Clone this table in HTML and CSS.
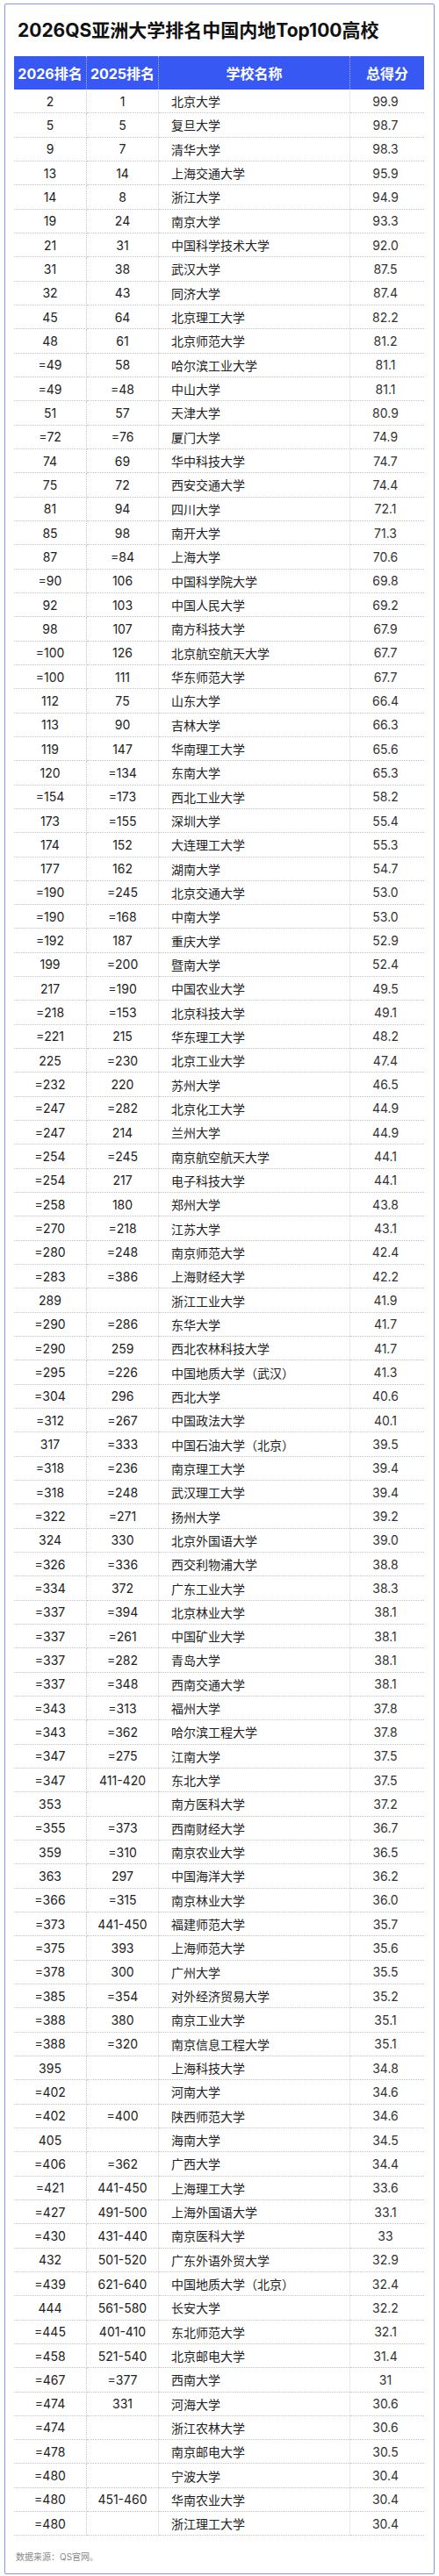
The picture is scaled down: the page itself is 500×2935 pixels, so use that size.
FILE: index.html
```html
<!DOCTYPE html>
<html lang="zh-CN">
<head>
<meta charset="utf-8">
<title>2026QS亚洲大学排名中国内地Top100高校</title>
<link rel="stylesheet" href="styles.css">
</head>
<body>
<div class="frame">
  <h1 class="title">2026QS亚洲大学排名中国内地Top100高校</h1>
  <table class="rank">
    <colgroup><col class="c1"><col class="c2"><col class="c3"><col class="c4"></colgroup>
    <thead>
      <tr><th>2026排名</th><th>2025排名</th><th>学校名称</th><th class="last">总得分</th></tr>
    </thead>
    <tbody>
      <tr><td>2</td><td>1</td><td class="name">北京大学</td><td class="score">99.9</td></tr>
      <tr><td>5</td><td>5</td><td class="name">复旦大学</td><td class="score">98.7</td></tr>
      <tr><td>9</td><td>7</td><td class="name">清华大学</td><td class="score">98.3</td></tr>
      <tr><td>13</td><td>14</td><td class="name">上海交通大学</td><td class="score">95.9</td></tr>
      <tr><td>14</td><td>8</td><td class="name">浙江大学</td><td class="score">94.9</td></tr>
      <tr><td>19</td><td>24</td><td class="name">南京大学</td><td class="score">93.3</td></tr>
      <tr><td>21</td><td>31</td><td class="name">中国科学技术大学</td><td class="score">92.0</td></tr>
      <tr><td>31</td><td>38</td><td class="name">武汉大学</td><td class="score">87.5</td></tr>
      <tr><td>32</td><td>43</td><td class="name">同济大学</td><td class="score">87.4</td></tr>
      <tr><td>45</td><td>64</td><td class="name">北京理工大学</td><td class="score">82.2</td></tr>
      <tr><td>48</td><td>61</td><td class="name">北京师范大学</td><td class="score">81.2</td></tr>
      <tr><td>=49</td><td>58</td><td class="name">哈尔滨工业大学</td><td class="score">81.1</td></tr>
      <tr><td>=49</td><td>=48</td><td class="name">中山大学</td><td class="score">81.1</td></tr>
      <tr><td>51</td><td>57</td><td class="name">天津大学</td><td class="score">80.9</td></tr>
      <tr><td>=72</td><td>=76</td><td class="name">厦门大学</td><td class="score">74.9</td></tr>
      <tr><td>74</td><td>69</td><td class="name">华中科技大学</td><td class="score">74.7</td></tr>
      <tr><td>75</td><td>72</td><td class="name">西安交通大学</td><td class="score">74.4</td></tr>
      <tr><td>81</td><td>94</td><td class="name">四川大学</td><td class="score">72.1</td></tr>
      <tr><td>85</td><td>98</td><td class="name">南开大学</td><td class="score">71.3</td></tr>
      <tr><td>87</td><td>=84</td><td class="name">上海大学</td><td class="score">70.6</td></tr>
      <tr><td>=90</td><td>106</td><td class="name">中国科学院大学</td><td class="score">69.8</td></tr>
      <tr><td>92</td><td>103</td><td class="name">中国人民大学</td><td class="score">69.2</td></tr>
      <tr><td>98</td><td>107</td><td class="name">南方科技大学</td><td class="score">67.9</td></tr>
      <tr><td>=100</td><td>126</td><td class="name">北京航空航天大学</td><td class="score">67.7</td></tr>
      <tr><td>=100</td><td>111</td><td class="name">华东师范大学</td><td class="score">67.7</td></tr>
      <tr><td>112</td><td>75</td><td class="name">山东大学</td><td class="score">66.4</td></tr>
      <tr><td>113</td><td>90</td><td class="name">吉林大学</td><td class="score">66.3</td></tr>
      <tr><td>119</td><td>147</td><td class="name">华南理工大学</td><td class="score">65.6</td></tr>
      <tr><td>120</td><td>=134</td><td class="name">东南大学</td><td class="score">65.3</td></tr>
      <tr><td>=154</td><td>=173</td><td class="name">西北工业大学</td><td class="score">58.2</td></tr>
      <tr><td>173</td><td>=155</td><td class="name">深圳大学</td><td class="score">55.4</td></tr>
      <tr><td>174</td><td>152</td><td class="name">大连理工大学</td><td class="score">55.3</td></tr>
      <tr><td>177</td><td>162</td><td class="name">湖南大学</td><td class="score">54.7</td></tr>
      <tr><td>=190</td><td>=245</td><td class="name">北京交通大学</td><td class="score">53.0</td></tr>
      <tr><td>=190</td><td>=168</td><td class="name">中南大学</td><td class="score">53.0</td></tr>
      <tr><td>=192</td><td>187</td><td class="name">重庆大学</td><td class="score">52.9</td></tr>
      <tr><td>199</td><td>=200</td><td class="name">暨南大学</td><td class="score">52.4</td></tr>
      <tr><td>217</td><td>=190</td><td class="name">中国农业大学</td><td class="score">49.5</td></tr>
      <tr><td>=218</td><td>=153</td><td class="name">北京科技大学</td><td class="score">49.1</td></tr>
      <tr><td>=221</td><td>215</td><td class="name">华东理工大学</td><td class="score">48.2</td></tr>
      <tr><td>225</td><td>=230</td><td class="name">北京工业大学</td><td class="score">47.4</td></tr>
      <tr><td>=232</td><td>220</td><td class="name">苏州大学</td><td class="score">46.5</td></tr>
      <tr><td>=247</td><td>=282</td><td class="name">北京化工大学</td><td class="score">44.9</td></tr>
      <tr><td>=247</td><td>214</td><td class="name">兰州大学</td><td class="score">44.9</td></tr>
      <tr><td>=254</td><td>=245</td><td class="name">南京航空航天大学</td><td class="score">44.1</td></tr>
      <tr><td>=254</td><td>217</td><td class="name">电子科技大学</td><td class="score">44.1</td></tr>
      <tr><td>=258</td><td>180</td><td class="name">郑州大学</td><td class="score">43.8</td></tr>
      <tr><td>=270</td><td>=218</td><td class="name">江苏大学</td><td class="score">43.1</td></tr>
      <tr><td>=280</td><td>=248</td><td class="name">南京师范大学</td><td class="score">42.4</td></tr>
      <tr><td>=283</td><td>=386</td><td class="name">上海财经大学</td><td class="score">42.2</td></tr>
      <tr><td>289</td><td></td><td class="name">浙江工业大学</td><td class="score">41.9</td></tr>
      <tr><td>=290</td><td>=286</td><td class="name">东华大学</td><td class="score">41.7</td></tr>
      <tr><td>=290</td><td>259</td><td class="name">西北农林科技大学</td><td class="score">41.7</td></tr>
      <tr><td>=295</td><td>=226</td><td class="name">中国地质大学（武汉）</td><td class="score">41.3</td></tr>
      <tr><td>=304</td><td>296</td><td class="name">西北大学</td><td class="score">40.6</td></tr>
      <tr><td>=312</td><td>=267</td><td class="name">中国政法大学</td><td class="score">40.1</td></tr>
      <tr><td>317</td><td>=333</td><td class="name">中国石油大学（北京）</td><td class="score">39.5</td></tr>
      <tr><td>=318</td><td>=236</td><td class="name">南京理工大学</td><td class="score">39.4</td></tr>
      <tr><td>=318</td><td>=248</td><td class="name">武汉理工大学</td><td class="score">39.4</td></tr>
      <tr><td>=322</td><td>=271</td><td class="name">扬州大学</td><td class="score">39.2</td></tr>
      <tr><td>324</td><td>330</td><td class="name">北京外国语大学</td><td class="score">39.0</td></tr>
      <tr><td>=326</td><td>=336</td><td class="name">西交利物浦大学</td><td class="score">38.8</td></tr>
      <tr><td>=334</td><td>372</td><td class="name">广东工业大学</td><td class="score">38.3</td></tr>
      <tr><td>=337</td><td>=394</td><td class="name">北京林业大学</td><td class="score">38.1</td></tr>
      <tr><td>=337</td><td>=261</td><td class="name">中国矿业大学</td><td class="score">38.1</td></tr>
      <tr><td>=337</td><td>=282</td><td class="name">青岛大学</td><td class="score">38.1</td></tr>
      <tr><td>=337</td><td>=348</td><td class="name">西南交通大学</td><td class="score">38.1</td></tr>
      <tr><td>=343</td><td>=313</td><td class="name">福州大学</td><td class="score">37.8</td></tr>
      <tr><td>=343</td><td>=362</td><td class="name">哈尔滨工程大学</td><td class="score">37.8</td></tr>
      <tr><td>=347</td><td>=275</td><td class="name">江南大学</td><td class="score">37.5</td></tr>
      <tr><td>=347</td><td>411-420</td><td class="name">东北大学</td><td class="score">37.5</td></tr>
      <tr><td>353</td><td></td><td class="name">南方医科大学</td><td class="score">37.2</td></tr>
      <tr><td>=355</td><td>=373</td><td class="name">西南财经大学</td><td class="score">36.7</td></tr>
      <tr><td>359</td><td>=310</td><td class="name">南京农业大学</td><td class="score">36.5</td></tr>
      <tr><td>363</td><td>297</td><td class="name">中国海洋大学</td><td class="score">36.2</td></tr>
      <tr><td>=366</td><td>=315</td><td class="name">南京林业大学</td><td class="score">36.0</td></tr>
      <tr><td>=373</td><td>441-450</td><td class="name">福建师范大学</td><td class="score">35.7</td></tr>
      <tr><td>=375</td><td>393</td><td class="name">上海师范大学</td><td class="score">35.6</td></tr>
      <tr><td>=378</td><td>300</td><td class="name">广州大学</td><td class="score">35.5</td></tr>
      <tr><td>=385</td><td>=354</td><td class="name">对外经济贸易大学</td><td class="score">35.2</td></tr>
      <tr><td>=388</td><td>380</td><td class="name">南京工业大学</td><td class="score">35.1</td></tr>
      <tr><td>=388</td><td>=320</td><td class="name">南京信息工程大学</td><td class="score">35.1</td></tr>
      <tr><td>395</td><td></td><td class="name">上海科技大学</td><td class="score">34.8</td></tr>
      <tr><td>=402</td><td></td><td class="name">河南大学</td><td class="score">34.6</td></tr>
      <tr><td>=402</td><td>=400</td><td class="name">陕西师范大学</td><td class="score">34.6</td></tr>
      <tr><td>405</td><td></td><td class="name">海南大学</td><td class="score">34.5</td></tr>
      <tr><td>=406</td><td>=362</td><td class="name">广西大学</td><td class="score">34.4</td></tr>
      <tr><td>=421</td><td>441-450</td><td class="name">上海理工大学</td><td class="score">33.6</td></tr>
      <tr><td>=427</td><td>491-500</td><td class="name">上海外国语大学</td><td class="score">33.1</td></tr>
      <tr><td>=430</td><td>431-440</td><td class="name">南京医科大学</td><td class="score">33</td></tr>
      <tr><td>432</td><td>501-520</td><td class="name">广东外语外贸大学</td><td class="score">32.9</td></tr>
      <tr><td>=439</td><td>621-640</td><td class="name">中国地质大学（北京）</td><td class="score">32.4</td></tr>
      <tr><td>444</td><td>561-580</td><td class="name">长安大学</td><td class="score">32.2</td></tr>
      <tr><td>=445</td><td>401-410</td><td class="name">东北师范大学</td><td class="score">32.1</td></tr>
      <tr><td>=458</td><td>521-540</td><td class="name">北京邮电大学</td><td class="score">31.4</td></tr>
      <tr><td>=467</td><td>=377</td><td class="name">西南大学</td><td class="score">31</td></tr>
      <tr><td>=474</td><td>331</td><td class="name">河海大学</td><td class="score">30.6</td></tr>
      <tr><td>=474</td><td></td><td class="name">浙江农林大学</td><td class="score">30.6</td></tr>
      <tr><td>=478</td><td></td><td class="name">南京邮电大学</td><td class="score">30.5</td></tr>
      <tr><td>=480</td><td></td><td class="name">宁波大学</td><td class="score">30.4</td></tr>
      <tr><td>=480</td><td>451-460</td><td class="name">华南农业大学</td><td class="score">30.4</td></tr>
      <tr><td>=480</td><td></td><td class="name">浙江理工大学</td><td class="score">30.4</td></tr>
    </tbody>
  </table>
  <p class="source">数据来源：QS官网。</p>
</div>
</body>
</html>
```

FILE: styles.css
```css
html, body {
  margin: 0;
  padding: 0;
  background: #ffffff;
}

body {
  font-family: Inter, "Noto Sans CJK SC", sans-serif;
  color: #222222;
  padding-top: 4px;
}

.frame {
  margin: 0 5px;
  border: 1px solid #8796e4;
  border-radius: 2px;
  padding: 0 11px 10px 10px;
  height: 2929px;
  box-sizing: border-box;
}

.title {
  margin: 15px 0 0 4px;
  font-size: 21px;
  line-height: 30px;
  font-weight: 700;
  color: #111111;
}

.rank {
  margin-top: 14px;
  width: 467px;
  table-layout: fixed;
  border-collapse: separate;
  border-spacing: 0;
}

.c1 { width: 83px; }
.c2 { width: 82px; }
.c3 { width: 218px; }
.c4 { width: 84px; }

.rank th {
  height: 38px;
  padding: 0;
  background: #3758f3;
  color: #ffffff;
  font-size: 16px;
  font-weight: 700;
  text-align: center;
  border-right: 1px dotted rgba(255, 255, 255, 0.55);
}

.rank th.last {
  border-right: none;
}

.rank td {
  height: 26.34px;
  padding: 0;
  font-size: 14px;
  text-align: center;
  color: #222222;
  border-bottom: 1px dotted #c4c4c4;
  white-space: nowrap;
}

.rank td:first-child {
  border-right: 1px dotted #c8c8c8;
}

.rank td:nth-child(2) {
  border-right: 1px solid #e4e4e4;
}

.rank td.name {
  text-align: left;
  padding-left: 14px;
  border-right: 1px solid #e8e8e8;
}

.rank td.score {
  color: #333333;
  padding-right: 4px;
}

.source {
  margin: 17px 0 0 2px;
  font-size: 10px;
  line-height: 14px;
  color: #8a8a8a;
}
```
